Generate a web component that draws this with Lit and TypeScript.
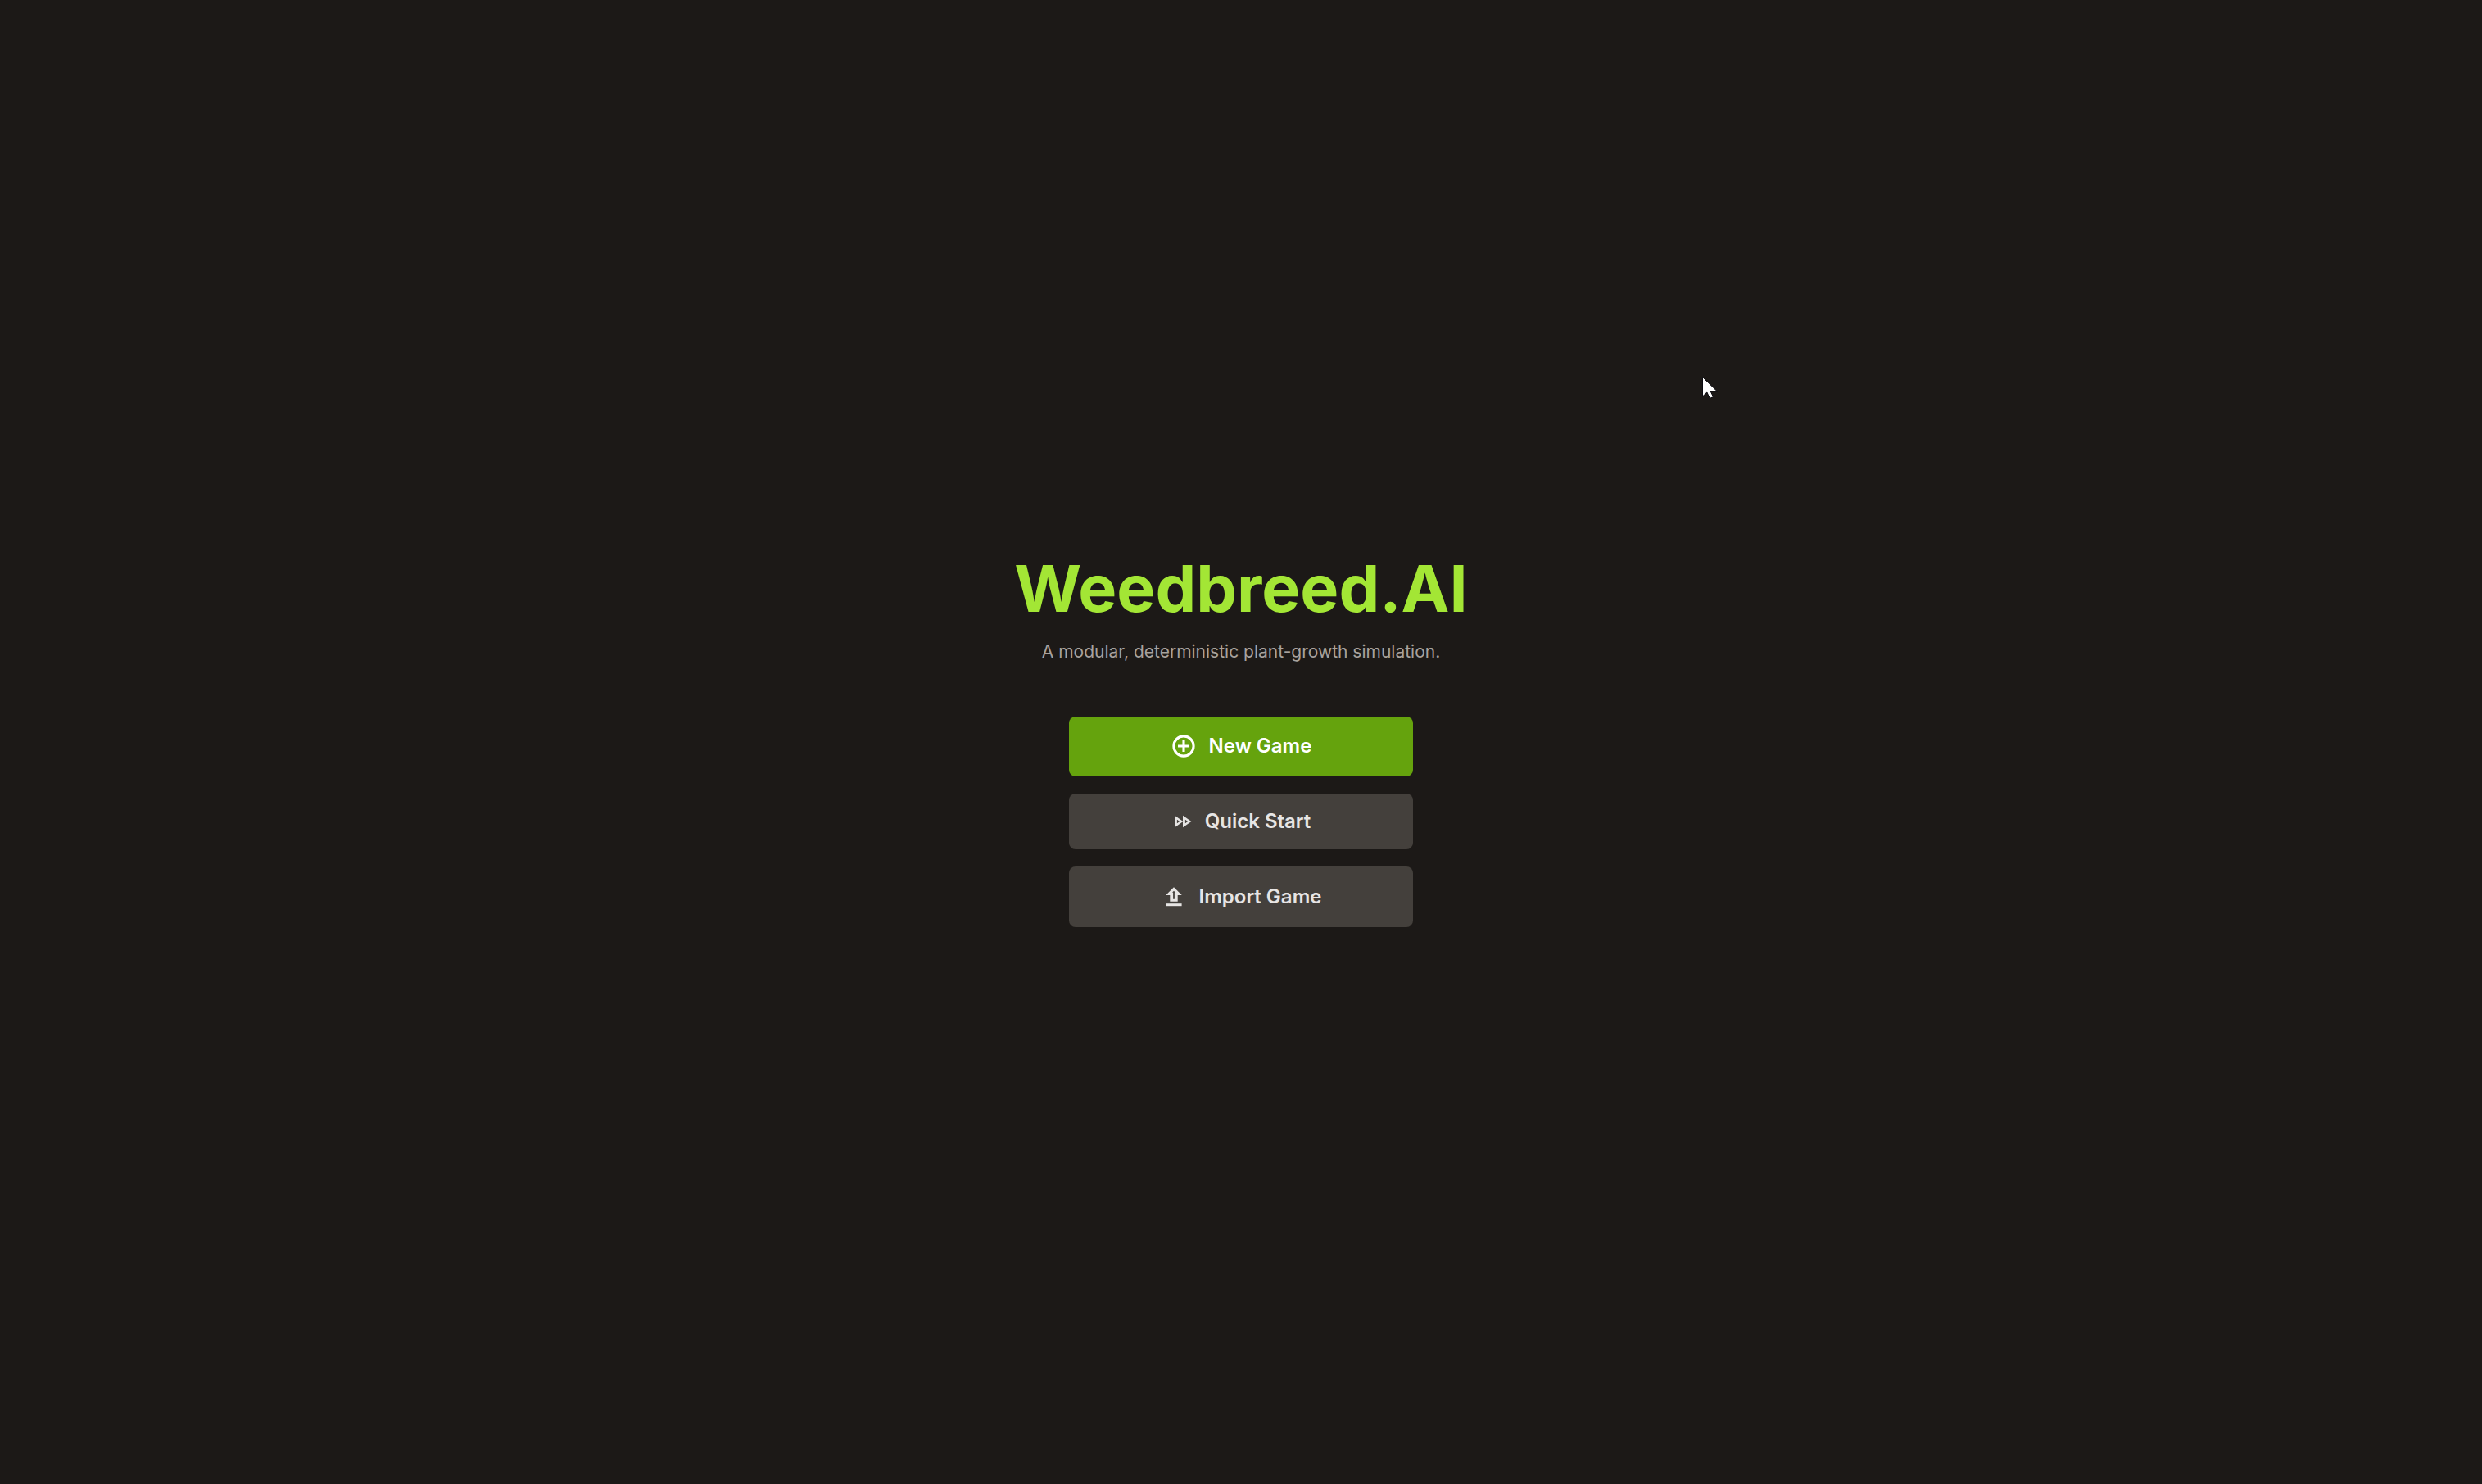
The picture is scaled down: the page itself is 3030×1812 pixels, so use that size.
import { LitElement, html, css, svg } from "lit";
import { customElement } from "lit/decorators.js";

const plusIcon = html`<svg class="icon plus" viewBox="0 0 32 32" aria-hidden="true">${svg`
  <circle cx="16" cy="16" r="12.1" fill="none" stroke="currentColor" stroke-width="3.1" />
  <path d="M16 9v14M9 16h14" fill="none" stroke="currentColor" stroke-width="3.1" />`}</svg>`;

const forwardIcon = html`<svg class="icon forward" viewBox="0 0 28 28" aria-hidden="true">${svg`
  <path fill="currentColor" fill-rule="evenodd"
    d="M4 6.8l10.4 7.2l-10.4 7.2zM6.9 11.8v4.4l3.2-2.2zM14 6.8l10.4 7.2l-10.4 7.2zM16.9 11.8v4.4l3.2-2.2z" />`}</svg>`;

const uploadIcon = html`<svg class="icon upload" viewBox="0 0 32 32" aria-hidden="true">${svg`
  <path fill="currentColor" fill-rule="evenodd"
    d="M16 4.3l9.8 9.6h-5.1v7.8h-9.4v-7.8h-5.1zM16 8.8l-2 2h1.1v7.9h1.8v-7.9h1.1z" />
  <path fill="currentColor" d="M6.4 24.2h19.2v3h-19.2z" />`}</svg>`;

@customElement("app-root")
export class AppRoot extends LitElement {
  static styles = css`
    :host {
      display: block;
      font-family: Inter, "Liberation Sans", sans-serif;
    }
    .screen {
      min-height: 100vh;
      display: flex;
      flex-direction: column;
      align-items: center;
      justify-content: center;
      background: #1c1917;
      cursor: default;
    }
    .title {
      margin: 0 0 24px;
      font-size: 79px;
      line-height: 76px;
      font-weight: 700;
      color: #a3e635;
    }
    .tagline {
      margin: 0 0 63px;
      font-size: 21px;
      line-height: 32px;
      color: #a8a29e;
    }
    .menu {
      display: flex;
      flex-direction: column;
      gap: 21px;
      width: 420px;
      max-width: 100%;
    }
    .button {
      display: flex;
      align-items: center;
      justify-content: center;
      gap: 15px;
      padding: 21px 32px;
      border: 0;
      border-radius: 8px;
      background: #44403c;
      color: #e7e5e4;
      font-family: inherit;
      font-size: 24px;
      line-height: 32px;
      font-weight: 600;
    }
    .primary {
      padding-top: 20px;
      background: #65a30d;
      color: #fff;
    }
    .compact {
      padding-block: 18px;
      gap: 13px;
    }
    .icon {
      width: 32px;
      height: 32px;
      flex: none;
    }
    .forward {
      width: 28px;
      height: 28px;
    }
    .pointer {
      position: absolute;
      left: 2078px;
      top: 460px;
      width: 20px;
      height: 28px;
      pointer-events: none;
    }
  `;

  render() {
    return html`
      <main class="screen">
        <h1 class="title">Weedbreed.AI</h1>
        <p class="tagline">A modular, deterministic plant-growth simulation.</p>
        <nav class="menu" aria-label="Main menu">
          <button class="button primary" type="button">${plusIcon}<span>New Game</span></button>
          <button class="button compact" type="button">${forwardIcon}<span>Quick Start</span></button>
          <button class="button" type="button">${uploadIcon}<span>Import Game</span></button>
        </nav>
        <svg class="pointer" viewBox="0 0 20 28" aria-hidden="true">
          <path d="M.5 .5v23.5l5.4-5l3.4 7.4l4.2-1.8l-3.2-6.6h8.2z" fill="#fff" stroke="#0b0a10" stroke-width="1" />
        </svg>
      </main>
    `;
  }
}
